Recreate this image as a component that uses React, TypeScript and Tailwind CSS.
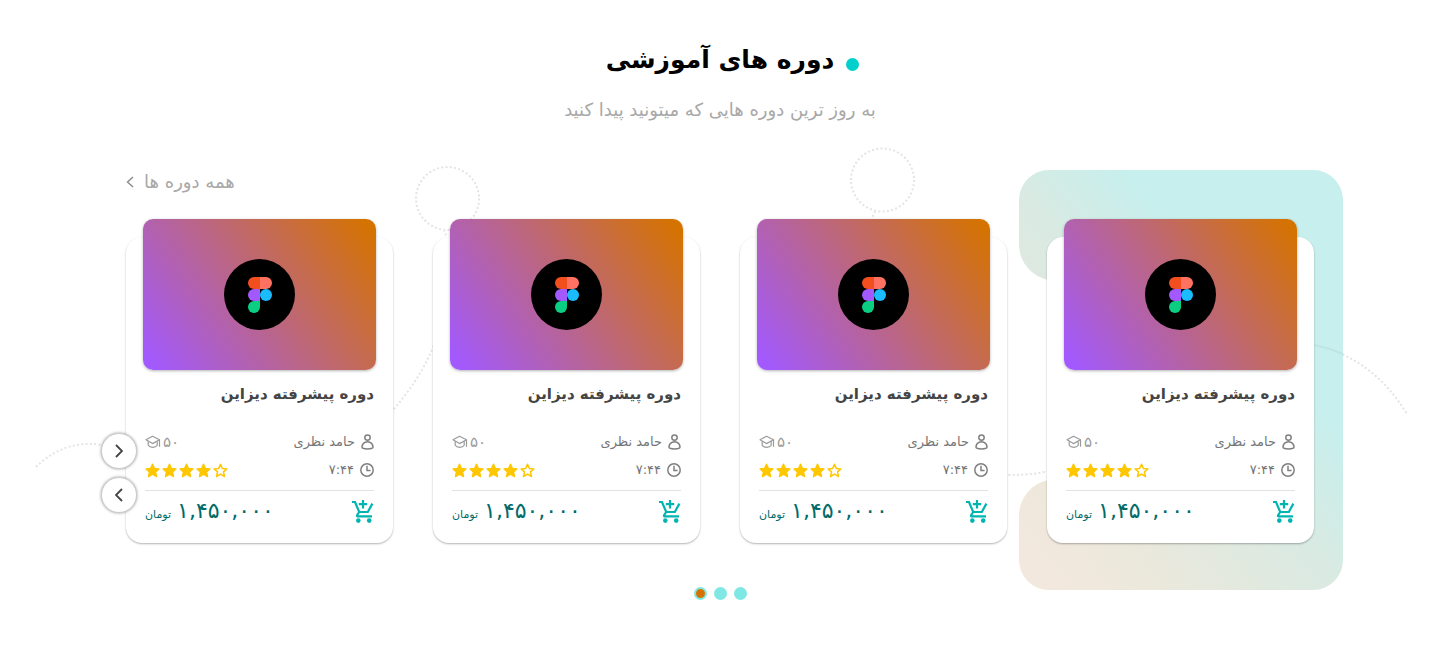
import React from "react";

type Course = {
  id: number;
  title: string;
  teacher: string;
  students: string;
  duration: string;
  price: string;
  rating: number;
};

const courses: Course[] = [1, 2, 3, 4].map((id) => ({
  id,
  title: "دوره پیشرفته دیزاین",
  teacher: "حامد نظری",
  students: "۵۰",
  duration: "۷:۴۴",
  price: "۱,۴۵۰,۰۰۰",
  rating: 4,
}));

function Backdrop() {
  return (
    <svg
      className="pointer-events-none absolute top-0 left-1/2 -translate-x-1/2"
      width="1440"
      height="664"
      viewBox="0 0 1440 664"
      fill="none"
      aria-hidden="true"
    >
      <defs>
        <linearGradient id="panel" gradientUnits="userSpaceOnUse" x1="1019" y1="590" x2="1289" y2="370">
          <stop offset="0.08" stopColor="#f3e8dd" />
          <stop offset="0.32" stopColor="#ebe8dc" />
          <stop offset="0.72" stopColor="#d9eae2" />
          <stop offset="1" stopColor="#c7efed" />
        </linearGradient>
      </defs>
      <g stroke="#e4e4e4" strokeWidth="2" strokeDasharray="2 2.3">
        <path d="M36 467C55 448 78 441 102 445C200 474 330 500 394 409C410 390 424 370 433 347C455 300 458 260 444 231" />
        <ellipse cx="447.5" cy="198.5" rx="31.5" ry="31.5" />
        <ellipse cx="882.5" cy="180" rx="31.5" ry="31.5" />
        <path d="M875 211C850 270 850 470 1008 475C1030 475 1040 473 1049 471" />
        <path d="M1314 345C1355 354 1385 378 1407 414" />
      </g>
      <path
        d="M1049 170H1313A30 30 0 0 1 1343 200V560A30 30 0 0 1 1313 590H1049A30 30 0 0 1 1019 560V516A36 36 0 0 1 1049 480H1100V280H1049A36 36 0 0 1 1019 246V200A30 30 0 0 1 1049 170Z"
        fill="url(#panel)"
      />
      <path d="M1314 345Q1329 348 1343 354" stroke="#bfe5e3" strokeWidth="2" />
    </svg>
  );
}

function FigmaLogo() {
  return (
    <svg width="24" height="36" viewBox="0 0 24 36" aria-label="Figma" role="img">
      <path d="M6 0h6v12H6A6 6 0 0 1 6 0Z" fill="#f24e1e" />
      <path d="M12 0h6a6 6 0 0 1 0 12h-6Z" fill="#ff7262" />
      <path d="M6 12h6v12H6a6 6 0 0 1 0-12Z" fill="#a259ff" />
      <circle cx="18" cy="18" r="6" fill="#1abcfe" />
      <path d="M6 24h6v6a6 6 0 1 1-6-6Z" fill="#0acf83" />
    </svg>
  );
}

function PersonIcon() {
  return (
    <svg width="13" height="16" viewBox="0 0 13 16" fill="none" stroke="#808080" strokeWidth="1.5" aria-hidden="true">
      <circle cx="6.5" cy="3.6" r="2.7" />
      <path d="M4.300 8.200C2.300 9.200 1 11.200 1 13C1 14.400 2.400 14.900 6.500 14.900S12 14.400 12 13C12 11.200 10.700 9.200 8.700 8.200C7.400 7.700 5.600 7.700 4.300 8.200Z" />
    </svg>
  );
}

function ClockIcon() {
  return (
    <svg width="14" height="14" viewBox="0 0 14 14" fill="none" stroke="#808080" strokeWidth="1.5" aria-hidden="true">
      <circle cx="7" cy="7" r="6.200" />
      <path d="M7 2.800V7.400H10.600" />
    </svg>
  );
}

function CapIcon() {
  return (
    <svg width="16" height="14" viewBox="0 0 16 14" fill="none" stroke="#9a9a9a" strokeWidth="1.2" strokeLinejoin="round" aria-hidden="true">
      <path d="M1 4.800L7.500 1.200L14.500 4.800L7.500 8.600Z" />
      <path d="M3.200 6.200V10.200C5 13 10.400 13 12.200 10.200V6.200M14.500 4.800V11.800" />
    </svg>
  );
}

function StarIcon({ filled }: { filled: boolean }) {
  return (
    <svg width="15" height="15" viewBox="0 0 15 15" fill={filled ? "#ffc700" : "none"} stroke="#ffc700" strokeWidth="1.500" strokeLinejoin="round" aria-hidden="true">
      <path d="M7.500 1.300L9.300 5.400L13.900 5.900L10.500 8.900L11.500 13.500L7.500 11.100L3.500 13.500L4.500 8.900L1.100 5.900L5.700 5.400Z" />
    </svg>
  );
}

function CartIcon() {
  return (
    <svg width="24" height="24" viewBox="0 0 24 24" fill="none" stroke="currentColor" strokeWidth="2.200" aria-hidden="true">
      <path d="M2 3H5L9.200 13H17.800L22.400 4.600M9.200 13L7 16.400Q6.800 17.400 8 17.400H22M13 1V9.400M8.800 5.200H17.200" />
      <circle cx="8.300" cy="21.600" r="2.300" fill="currentColor" stroke="none" />
      <circle cx="19.200" cy="21.600" r="2.300" fill="currentColor" stroke="none" />
    </svg>
  );
}

function CourseCard({ course }: { course: Course }) {
  return (
    <article className="rounded-2xl bg-white px-[17px] pb-5 shadow-[0_1px_2px_rgba(0,0,0,0.3)]">
      <div className="-mt-[18px] flex h-[151px] items-center justify-center rounded-[10px] bg-[linear-gradient(54deg,#a259ff_3%,#d57300_97%)] shadow-[0_1px_3px_rgba(0,0,0,0.3)]">
        <span className="flex size-[71px] items-center justify-center rounded-full bg-black">
          <FigmaLogo />
        </span>
      </div>
      <div className="px-0.5">
        <h3 className="mt-3 text-[15px] leading-6 font-bold text-[#444]">{course.title}</h3>
        <div className="mt-6 flex h-6 items-center justify-between">
          <span className="flex items-center gap-1.5 text-[13px] text-[#757575]">
            <PersonIcon />
            {course.teacher}
          </span>
          <span className="flex items-center gap-0.5 text-[15px] text-[#9a9a9a]">
            {course.students}
            <CapIcon />
          </span>
        </div>
        <div className="mt-1 flex h-6 items-center justify-between">
          <span className="flex items-center gap-1.5 text-[13px] text-[#757575]">
            <ClockIcon />
            <bdi dir="ltr">{course.duration}</bdi>
          </span>
          <span dir="ltr" role="img" aria-label="۴ از ۵" className="flex gap-0.5">
            {[1, 2, 3, 4, 5].map((n) => (
              <StarIcon key={n} filled={n <= course.rating} />
            ))}
          </span>
        </div>
        <div className="mt-2 flex items-center justify-between border-t border-[#e2e2e2] pt-2">
          <button type="button" aria-label="افزودن به سبد خرید" className="h-6 text-[#00b5b0]">
            <CartIcon />
          </button>
          <p className="flex h-6 items-baseline gap-1.5 text-[#006b67]">
            <bdi dir="ltr" className="text-[22px] leading-6">{course.price}</bdi>
            <span className="text-[11px] leading-6">تومان</span>
          </p>
        </div>
      </div>
    </article>
  );
}

function Chevron({ flip = false }: { flip?: boolean }) {
  return (
    <svg width="8" height="14" viewBox="0 0 8 14" fill="none" stroke="currentColor" strokeWidth="1.800" aria-hidden="true">
      <path d={flip ? "M1 1L7 7L1 13" : "M7 1L1 7L7 13"} />
    </svg>
  );
}

export default function App() {
  const arrow =
    "flex size-9 items-center justify-center rounded-full border border-[#ccc] bg-white text-[#444] shadow-[0_0_3px_rgba(0,0,0,0.4)]";
  return (
    <section
      dir="rtl"
      lang="fa"
      className="relative overflow-hidden bg-white px-6 pt-9 pb-16 font-['DejaVu_Sans',sans-serif]"
    >
      <Backdrop />
      <div className="relative mx-auto max-w-[1188px]">
        <header className="text-center">
          <h2 className="flex items-center justify-center gap-3 text-[25px] leading-12 font-bold text-black">
            <span className="-ms-[25px] mt-2 size-[13px] rounded-full bg-[#00d0cb]" />
            دوره های آموزشی
          </h2>
          <p className="mt-3 text-lg leading-7 text-[#a8a8a8]">به روز ترین دوره هایی که میتونید پیدا کنید</p>
        </header>
        <div className="mt-11 flex justify-end">
          <a href="#courses" className="flex items-center gap-2.5 text-lg leading-7 text-[#a8a8a8]">
            همه دوره ها
            <svg width="8" height="12" viewBox="0 0 8 12" fill="none" stroke="#8a8a8a" strokeWidth="1.400" aria-hidden="true">
              <path d="M7 1L1.500 6L7 11" />
            </svg>
          </a>
        </div>
        <div id="courses" className="relative mt-[41px]">
          <div className="grid gap-10 sm:grid-cols-2 lg:grid-cols-4">
            {courses.map((c) => (
              <CourseCard key={c.id} course={c} />
            ))}
          </div>
          <div className="absolute bottom-[30px] -left-[25px] flex flex-col gap-2">
            <button type="button" aria-label="قبلی" className={arrow}>
              <Chevron flip />
            </button>
            <button type="button" aria-label="بعدی" className={arrow}>
              <Chevron />
            </button>
          </div>
        </div>
        <nav aria-label="صفحه‌ها" className="mt-11 flex justify-center gap-[7px]">
          <button type="button" aria-label="صفحه ۱" className="size-[13px] rounded-full bg-[#80e8e4]" />
          <button type="button" aria-label="صفحه ۲" className="size-[13px] rounded-full bg-[#80e8e4]" />
          <button type="button" aria-label="صفحه ۳" className="size-[13px] rounded-full border-2 border-[#80e8e4] bg-[#d57300]" />
        </nav>
      </div>
    </section>
  );
}
